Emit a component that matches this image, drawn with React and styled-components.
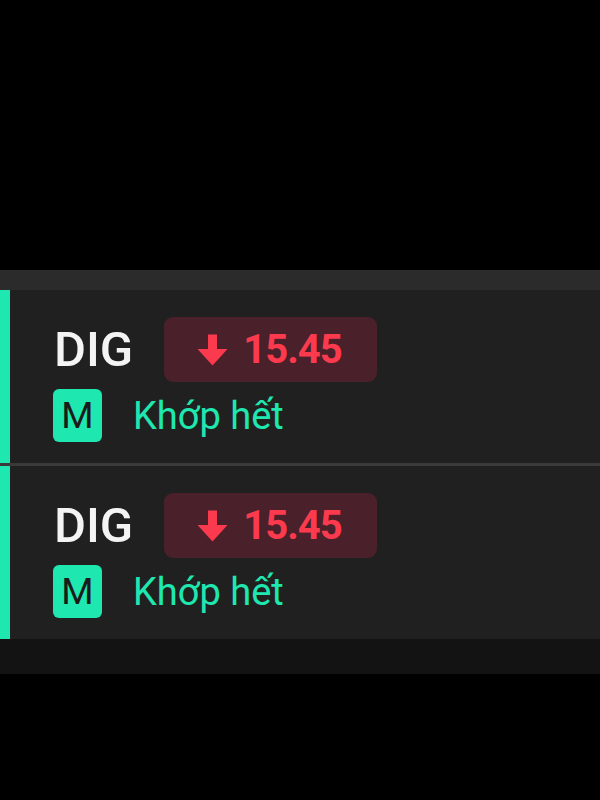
import React from 'react'
import styled, { createGlobalStyle } from 'styled-components'

const GlobalStyle = createGlobalStyle`
  html, body {
    margin: 0;
    padding: 0;
    background: #000;
  }
  body {
    font-family: Roboto, 'Noto Sans', sans-serif;
  }
`

const orders = [
  { id: 1, symbol: 'DIG', price: '15.45', side: 'M', status: 'Khớp hết' },
  { id: 2, symbol: 'DIG', price: '15.45', side: 'M', status: 'Khớp hết' },
]

const DownArrow = () => (
  <ArrowIcon width="31" height="32" viewBox="0 0 31 32">
    <path d="M11 0.5 H20 V15 H30.5 L15.5 31.5 L0.5 15 H11 Z" fill="#fb3a4e" />
  </ArrowIcon>
)

const OrderRow = ({ order }) => (
  <Row>
    <Accent />
    <RowBody>
      <TopLine>
        <Symbol>{order.symbol}</Symbol>
        <PriceBadge>
          <DownArrow />
          <Price>{order.price}</Price>
        </PriceBadge>
      </TopLine>
      <BottomLine>
        <SideTag>{order.side}</SideTag>
        <Status>{order.status}</Status>
      </BottomLine>
    </RowBody>
  </Row>
)

const App = () => {
  return (
    <Page>
      <GlobalStyle />
      <Spacer />
      <Panel>
        <TopStrip />
        {orders.map((o, i) => (
          <React.Fragment key={o.id}>
            {i > 0 && <Divider />}
            <OrderRow order={o} />
          </React.Fragment>
        ))}
        <BottomStrip />
      </Panel>
    </Page>
  )
}

const Page = styled.div`
  width: 600px;
  height: 800px;
  background: #000;
  display: flex;
  flex-direction: column;
  overflow: hidden;
`

const Spacer = styled.div`
  height: 270px;
  flex-shrink: 0;
`

const Panel = styled.div`
  display: flex;
  flex-direction: column;
`

const TopStrip = styled.div`
  height: 20px;
  background: #2b2b2b;
`

const BottomStrip = styled.div`
  height: 35px;
  background: #131313;
`

const Divider = styled.div`
  height: 3px;
  background: #3a3a3a;
`

const Row = styled.div`
  display: flex;
  background: #202020;
`

const Accent = styled.div`
  width: 10px;
  flex-shrink: 0;
  background: #1ee8b0;
`

const RowBody = styled.div`
  display: flex;
  flex-direction: column;
  gap: 7px;
  padding: 27px 0 21px 43px;
`

const TopLine = styled.div`
  display: flex;
  align-items: center;
  gap: 31px;
`

const Symbol = styled.div`
  font-family: Roboto, sans-serif;
  font-weight: 500;
  font-size: 49px;
  line-height: 1;
  color: #f4f4f4;
  padding-left: 1px;
`

const PriceBadge = styled.div`
  display: flex;
  align-items: center;
  gap: 15px;
  height: 65px;
  padding: 0 35px 0 33px;
  box-sizing: border-box;
  border-radius: 9px;
  background: #4a202a;
`

const ArrowIcon = styled.svg`
  flex-shrink: 0;
  display: block;
`

const Price = styled.span`
  font-family: Roboto, sans-serif;
  font-weight: 700;
  font-size: 40px;
  letter-spacing: -1px;
  line-height: 1;
  color: #fb3a4e;
  margin-top: 1px;
`

const BottomLine = styled.div`
  display: flex;
  align-items: center;
  gap: 31px;
`

const SideTag = styled.div`
  width: 49px;
  height: 53px;
  border-radius: 6px;
  background: #1ee8b0;
  color: #1b1b1b;
  font-family: Roboto, sans-serif;
  font-weight: 400;
  font-size: 37px;
  display: flex;
  align-items: center;
  justify-content: center;
`

const Status = styled.span`
  font-family: Roboto, sans-serif;
  font-weight: 400;
  font-size: 38px;
  line-height: 1;
  color: #1ee8b0;
`

export default App
